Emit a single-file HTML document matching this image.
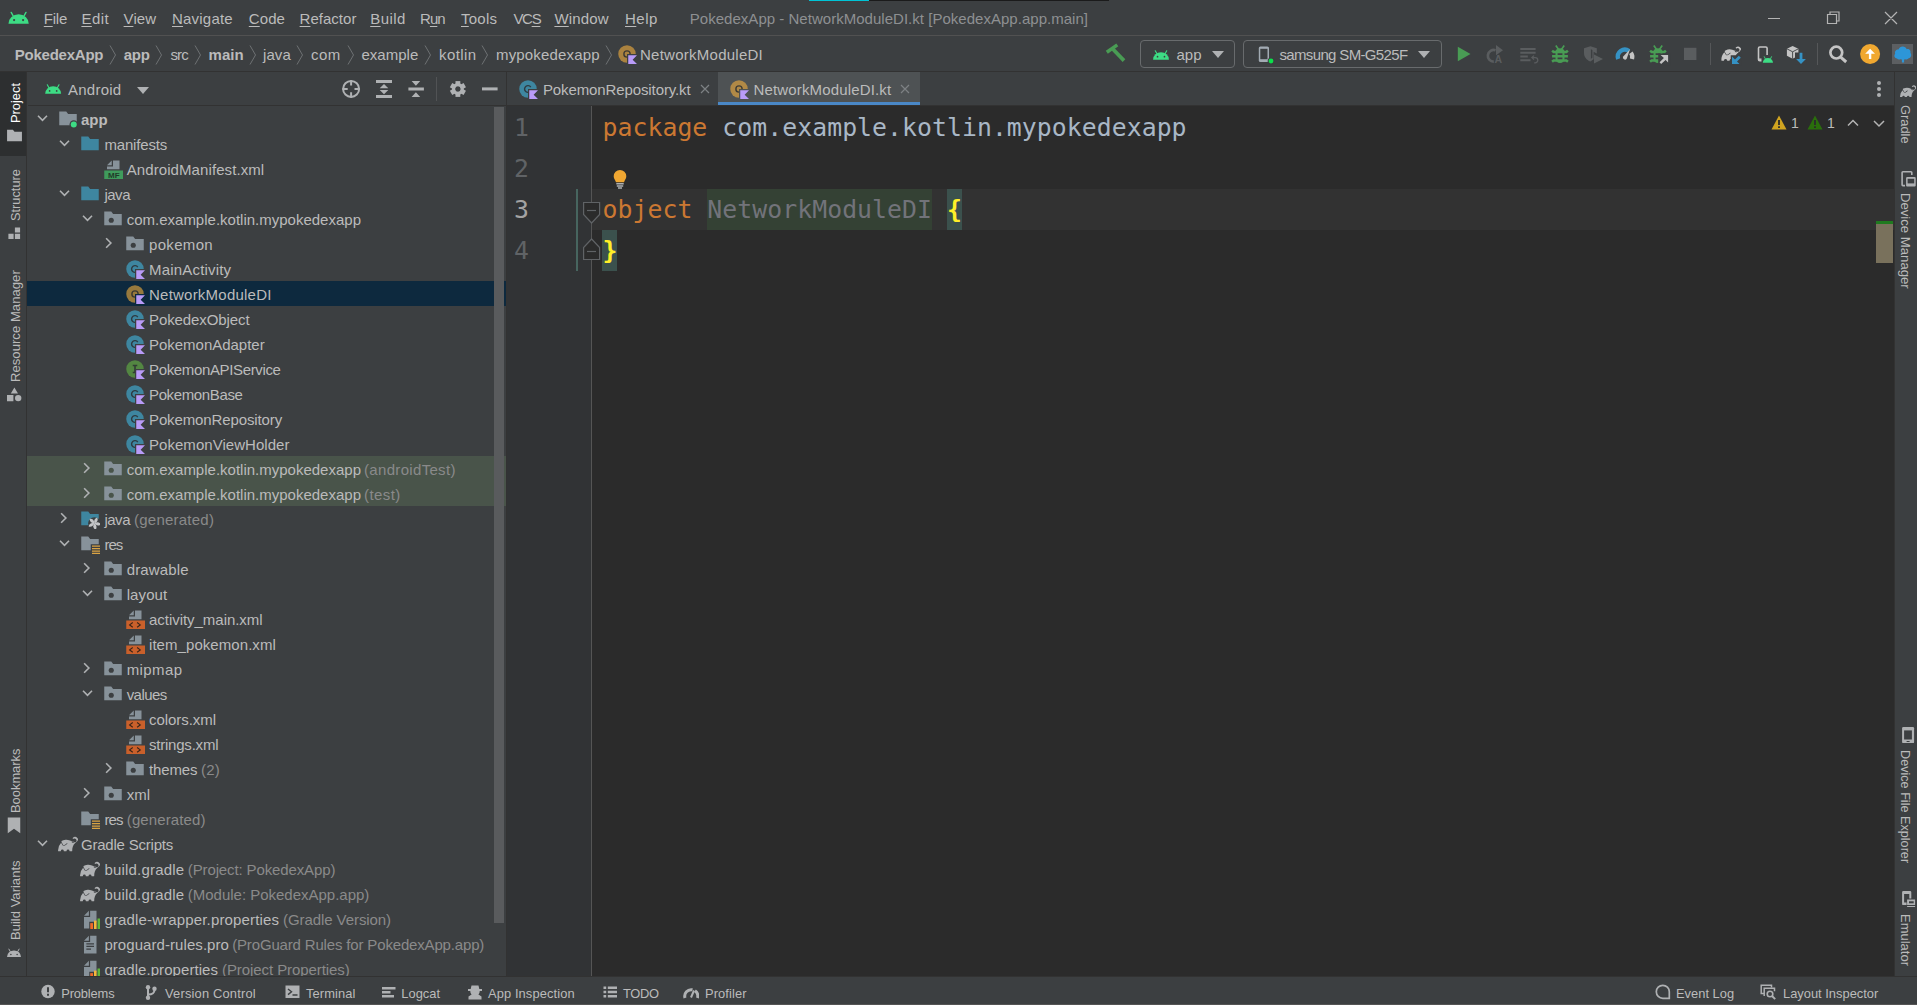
<!DOCTYPE html><html><head><meta charset="utf-8"><title>PokedexApp - NetworkModuleDI.kt</title><style>
*{box-sizing:border-box;margin:0;padding:0}
html,body{width:1917px;height:1005px;overflow:hidden;background:#3c3f41}
body{position:relative;font-family:"Liberation Sans",sans-serif;font-size:15px;color:#bbbbbb;-webkit-font-smoothing:antialiased}
.abs,.ic,.t,.r{position:absolute}
.t{white-space:nowrap;line-height:20px;height:20px}
.b{font-weight:bold}
.h{color:#8a8a8a}
u{text-decoration:underline;text-underline-offset:2px;text-decoration-thickness:1px}
.row{position:absolute;left:28px;width:477px;height:25px}
.code{font-family:"DejaVu Sans Mono","Liberation Mono",monospace;font-size:24.8px;letter-spacing:0.047px;line-height:41px;height:41px;white-space:pre;position:absolute}
.ln{font-family:"DejaVu Sans Mono","Liberation Mono",monospace;font-size:24.8px;line-height:41px;height:41px;position:absolute;left:514px;color:#606366}
.vt{position:absolute;white-space:nowrap;font-size:13.5px;line-height:16px;height:16px;transform-origin:0 0}
.bt{position:absolute;white-space:nowrap;font-size:12.9px;line-height:20px;height:20px;top:983.700px}
</style></head><body>
<div class="abs" style="left:0px;top:35px;width:1917px;height:1px;background:#515151;"></div>
<div class="abs" style="left:809px;top:0px;width:60px;height:1px;background:#00c4d6;"></div>
<div class="abs" style="left:869px;top:0px;width:240px;height:1px;background:#1b1b1b;"></div>
<svg class="ic" style="left:7.3px;top:5.2px" width="23.2" height="23.2" viewBox="0 0 16 16" ><path fill="#3ddc84" d="M1 13a7 6.6 0 0 1 14 0z"/><path stroke="#3ddc84" stroke-width="1" stroke-linecap="round" d="M4.3 7.6 2.9 5.1M11.7 7.6 13.1 5.1"/><circle cx="4.9" cy="10.4" r=".75" fill="#3c3f41"/><circle cx="11.1" cy="10.4" r=".75" fill="#3c3f41"/></svg>
<div class="t " style="left:43.8px;top:9px;letter-spacing:-0.25px;"><u>F</u>ile</div>
<div class="t " style="left:81.4px;top:9px;letter-spacing:0.475px;"><u>E</u>dit</div>
<div class="t " style="left:123.6px;top:9px;letter-spacing:0.05px;"><u>V</u>iew</div>
<div class="t " style="left:172.0px;top:9px;letter-spacing:0.214px;"><u>N</u>avigate</div>
<div class="t " style="left:248.8px;top:9px;letter-spacing:0.075px;"><u>C</u>ode</div>
<div class="t " style="left:299.6px;top:9px;letter-spacing:0.014px;"><u>R</u>efactor</div>
<div class="t " style="left:370.2px;top:9px;letter-spacing:0.44px;"><u>B</u>uild</div>
<div class="t " style="left:420.0px;top:9px;letter-spacing:-0.934px;">R<u>u</u>n</div>
<div class="t " style="left:461.0px;top:9px;letter-spacing:0.26px;"><u>T</u>ools</div>
<div class="t " style="left:513.4px;top:9px;letter-spacing:-1.3px;">VC<u>S</u></div>
<div class="t " style="left:554.4px;top:9px;letter-spacing:0.184px;"><u>W</u>indow</div>
<div class="t " style="left:625.0px;top:9px;letter-spacing:0.475px;"><u>H</u>elp</div>
<div class="t " style="left:689.8px;top:9px;letter-spacing:0.025px;color:#8e9092">PokedexApp - NetworkModuleDI.kt [PokedexApp.app.main]</div>
<svg class="ic" style="left:1760px;top:4px" width="150" height="28" viewBox="0 0 150 28"><path stroke="#b4b4b4" stroke-width="1.200" fill="none" d="M8 14.500h12M67.500 10.500h9v9h-9zM70 10.500V8h9v9h-2.500M125 8l12 12M137 8l-12 12"/></svg>
<div class="abs" style="left:0px;top:71px;width:1917px;height:1px;background:#323232;"></div>
<div class="t b" style="left:14.8px;top:45px;letter-spacing:-0.24px;">PokedexApp</div>
<div class="t b" style="left:123.8px;top:45px;letter-spacing:-0.3px;">app</div>
<div class="t " style="left:170.4px;top:45px;letter-spacing:-0.867px;">src</div>
<div class="t b" style="left:208.6px;top:45px;letter-spacing:0.05px;">main</div>
<div class="t " style="left:263.0px;top:45px;letter-spacing:0.075px;">java</div>
<div class="t " style="left:311.0px;top:45px;letter-spacing:0.4px;">com</div>
<div class="t " style="left:361.4px;top:45px;letter-spacing:0.028px;">example</div>
<div class="t " style="left:439.0px;top:45px;letter-spacing:0.417px;">kotlin</div>
<div class="t " style="left:496.0px;top:45px;letter-spacing:0.158px;">mypokedexapp</div>
<svg class="ic" style="left:108.6px;top:45px" width="8" height="20" viewBox="0 0 8 20"><path d="M1 .5 6.500 10 1 19.500" fill="none" stroke="#6e7173" stroke-width="1"/></svg>
<svg class="ic" style="left:154.8px;top:45px" width="8" height="20" viewBox="0 0 8 20"><path d="M1 .5 6.500 10 1 19.500" fill="none" stroke="#6e7173" stroke-width="1"/></svg>
<svg class="ic" style="left:193.6px;top:45px" width="8" height="20" viewBox="0 0 8 20"><path d="M1 .5 6.500 10 1 19.500" fill="none" stroke="#6e7173" stroke-width="1"/></svg>
<svg class="ic" style="left:248.8px;top:45px" width="8" height="20" viewBox="0 0 8 20"><path d="M1 .5 6.500 10 1 19.500" fill="none" stroke="#6e7173" stroke-width="1"/></svg>
<svg class="ic" style="left:295.9px;top:45px" width="8" height="20" viewBox="0 0 8 20"><path d="M1 .5 6.500 10 1 19.500" fill="none" stroke="#6e7173" stroke-width="1"/></svg>
<svg class="ic" style="left:346.9px;top:45px" width="8" height="20" viewBox="0 0 8 20"><path d="M1 .5 6.500 10 1 19.500" fill="none" stroke="#6e7173" stroke-width="1"/></svg>
<svg class="ic" style="left:423.7px;top:45px" width="8" height="20" viewBox="0 0 8 20"><path d="M1 .5 6.500 10 1 19.500" fill="none" stroke="#6e7173" stroke-width="1"/></svg>
<svg class="ic" style="left:481.2px;top:45px" width="8" height="20" viewBox="0 0 8 20"><path d="M1 .5 6.500 10 1 19.500" fill="none" stroke="#6e7173" stroke-width="1"/></svg>
<svg class="ic" style="left:604.9px;top:45px" width="8" height="20" viewBox="0 0 8 20"><path d="M1 .5 6.500 10 1 19.500" fill="none" stroke="#6e7173" stroke-width="1"/></svg>
<svg class="ic" style="left:617px;top:44px" width="20" height="20" viewBox="0 0 16 16" ><circle cx="8" cy="8" r="7" fill="#F4AF3D" fill-opacity="0.6"/><circle cx="8" cy="8" r="2.500" fill="none" stroke="#2c2f33" stroke-opacity=".85" stroke-width="1.150"/><path fill="#3c3f41" d="M8 8h8v8H8z"/><path fill="#b99bf8" d="M9 9h7l-3.500 3.500L16 16H9z"/></svg>
<div class="t " style="left:640.0px;top:45px;letter-spacing:0.253px;">NetworkModuleDI</div>
<div class="abs" style="left:1140px;top:40px;width:95px;height:27.500px;border:1px solid #686b6d;border-radius:4px"></div>
<svg class="ic" style="left:1152px;top:44.5px" width="18" height="18" viewBox="0 0 16 16" ><path fill="#3ddc84" d="M1 13a7 6.6 0 0 1 14 0z"/><path stroke="#3ddc84" stroke-width="1" stroke-linecap="round" d="M4.3 7.6 2.9 5.1M11.7 7.6 13.1 5.1"/><circle cx="4.9" cy="10.4" r=".75" fill="#3c3f41"/><circle cx="11.1" cy="10.4" r=".75" fill="#3c3f41"/></svg>
<div class="t " style="left:1176.5px;top:45px;">app</div>
<svg class="ic" style="left:1211.5px;top:51px" width="12" height="7" viewBox="0 0 12 7"><path d="M0 0h12L6 7z" fill="#afb1b3"/></svg>
<div class="abs" style="left:1243px;top:40px;width:199px;height:27.500px;border:1px solid #686b6d;border-radius:4px"></div>
<div class="t " style="left:1279.5px;top:45px;letter-spacing:-0.656px;">samsung SM-G525F</div>
<svg class="ic" style="left:1418px;top:51px" width="12" height="7" viewBox="0 0 12 7"><path d="M0 0h12L6 7z" fill="#afb1b3"/></svg>
<svg class="ic" style="left:1100px;top:36px" width="817" height="36" viewBox="1100 36 817 36"><path stroke="#499c54" stroke-width="3.500" fill="none" d="M1106.800 52.300 1117.300 44.900"/><path stroke="#499c54" stroke-width="3.700" fill="none" d="M1112.800 49 1124 60.600"/><rect x="1258.800" y="46.500" width="10.200" height="15.500" rx="1.600" fill="#a2abb3"/><rect x="1260.300" y="48.800" width="7.200" height="10.400" fill="#3c3f41"/><circle cx="1271" cy="61" r="3.300" fill="#3c3f41"/><circle cx="1271" cy="61" r="2.400" fill="#0be04b"/><path fill="#499c54" d="M1457.800 46.800 1470.500 54 1457.800 61.300z"/><path fill="none" stroke="#5a5d5f" stroke-width="2.700" d="M1495.500 50.300A5.800 5.800 0 1 0 1493.800 61.600"/><path fill="#5a5d5f" d="M1496 45 1503 50.250 1496 55.200z"/><text x="1494.600" y="62.800" font-family="Liberation Sans, sans-serif" font-weight="bold" font-size="10.500" fill="#5a5d5f">A</text><path stroke="#5a5d5f" stroke-width="2.100" fill="none" d="M1520.300 49h15.300M1520.300 52.750h15.300M1520.300 56.500h7.500M1520.300 60.300h10.200"/><path stroke="#5a5d5f" stroke-width="1.300" fill="none" d="M1532 57.600h3.200a2.600 2.600 0 0 1 0 5.200h-1M1534 55.600l-2.100 2 2.100 2"/><path fill="#499c54" d="M1560 48.200c2.900 0 4.500 1.600 4.500 3.900v6.400c0 2.700-1.900 4.600-4.500 4.600s-4.500-1.900-4.500-4.600v-6.400c0-2.300 1.600-3.900 4.500-3.900z"/><path stroke="#499c54" stroke-width="1.700" fill="none" d="M1558.4 49.200 1555.8 45.600M1561.6 49.200 1564.2 45.600"/><path stroke="#499c54" stroke-width="2.500" fill="none" d="M1552.1 50.600l1.600 1.400H1566.3l1.600-1.400M1552.1 56.200H1567.9M1552.1 61.800l1.600-1.400H1566.3l1.600 1.400"/><path stroke="#3c3f41" stroke-width="1.800" d="M1557.6 54.100h4.800M1557.6 58.400h4.800"/><path fill="#5a5d5f" d="M1584 48.300l6.400-2 6.400 2v5.200l-3.200-1.800v7.600l-3.200 2.200c-4-1.700-6.400-4.800-6.400-8.600z"/><path fill="#3c3f41" d="M1590.900 49.300v9.500l1.500-1V50z"/><path fill="#5a5d5f" d="M1594 54.500 1603 58.900 1594 63.500z"/><path fill="none" stroke="#3592c4" stroke-width="4.300" d="M1618.200 59A7.100 7.100 0 0 1 1629 50.900"/><path fill="none" stroke="#c4c4c4" stroke-width="4.300" d="M1630.900 52.800A7.100 7.100 0 0 1 1632 59"/><path fill="#c4c4c4" d="M1630 49.300 1626.700 58.700a2.100 2.100 0 0 1-3.700-1.900z"/><g><path fill="#499c54" d="M1658 48.200c2.900 0 4.500 1.600 4.500 3.900v6.400c0 2.700-1.900 4.600-4.500 4.600s-4.500-1.900-4.500-4.600v-6.400c0-2.300 1.600-3.900 4.500-3.900z"/><path stroke="#499c54" stroke-width="1.700" fill="none" d="M1656.4 49.200 1653.8 45.600M1659.6 49.200 1662.2 45.600"/><path stroke="#499c54" stroke-width="2.500" fill="none" d="M1650.1 50.600l1.600 1.400H1664.3l1.600-1.400M1650.1 56.200H1665.9M1650.1 61.800l1.600-1.400H1664.3l1.600 1.400"/><path stroke="#3c3f41" stroke-width="1.800" d="M1655.6 54.100h4.800M1655.6 58.400h4.800"/><path fill="#3c3f41" d="M1658.200 53.500h12v12h-12z"/><path fill="#c4c4c4" d="M1660.600 55h7.500v7.500l-2.500-2.500-4.500 4-1.500-1.700 4.300-4.300z"/></g><rect x="1684" y="47.800" width="12.400" height="12.200" fill="#5a5d5f"/><path stroke="#555759" stroke-width="1" d="M1710.500 43v22M1817.500 43v22"/><g transform="translate(1721.300 43.700) scale(1.230)"><path fill="#c4c4c4" d="M15.5,3.220a2.700,2.700,0,0,0-3.740-.070.260.260,0,0,0,0,.370l.320.330a.250.250,0,0,0,.330,0,1.540,1.540,0,0,1,2,2.310C12.320,8.300,9.560,2.470,3.300,5.450a.860.860,0,0,0-.370,1.200L4,8.510a.850.850,0,0,0,1.150.310l.470-.260a11,11,0,0,0,1.500-1.110.260.260,0,0,1,.340,0h0a.260.260,0,0,1,0,.390,11.180,11.180,0,0,1-1.570,1.180h0l-.470.260a1.360,1.360,0,0,1-.670.180,1.390,1.390,0,0,1-1.210-.7L2.500,7A8.810,8.810,0,0,0,.060,13.520a.260.260,0,0,0,.260.250H2a.250.250,0,0,0,.250-.220,1.220,1.220,0,0,1,2.420,0,.250.250,0,0,0,.250.220H6.560a.250.250,0,0,0,.250-.220,1.220,1.220,0,0,1,2.420,0,.250.250,0,0,0,.250.220h1.620a.260.260,0,0,0,.260-.250c0-2.290.650-4.920,2.410-6.230C16.740,4.890,16.190,3.910,15.500,3.220Zm-3.340,4L11,6.640H11a.730.730,0,1,1,1.160.590Z"/></g><path fill="#3c3f41" d="M1730.700 55.200l5 0 3-3 3.600 3.600-3 3 2 2v4.500h-10.600z"/><path fill="#3592c4" d="M1732 56.500v7.500h7.500l-2.500-2.500 3.800-3.700-2-2-3.800 3.700z"/><rect x="1758.500" y="47" width="8.600" height="13.800" rx="1.300" fill="none" stroke="#c4c4c4" stroke-width="1.600"/><path stroke="#c4c4c4" stroke-width="1.400" d="M1758.500 59.200h5"/><path fill="#3c3f41" d="M1761.500 55h12.500v9h-12.500z"/><path fill="#3ddc84" d="M1762.800 62.800a5.100 4.800 0 0 1 10.200 0z"/><path stroke="#3ddc84" stroke-width=".9" stroke-linecap="round" d="M1765.200 58.600 1764.300 56.700M1770.600 58.600 1771.500 56.700"/><path fill="#c4c4c4" d="M1792.600 46 1798.400 48.800v6.900l-5.800 3.100-5.700-3.100v-6.900z"/><path stroke="#3c3f41" stroke-width=".9" fill="none" d="M1786.900 48.800 1792.600 51.800 1798.400 48.800M1792.600 51.800v7"/><path fill="#3c3f41" d="M1795 52.500h11.500v12H1795z"/><path fill="#3592c4" d="M1799.600 52.800h2.800v6.200h3.500l-4.900 5-4.900-5h3.500z"/><circle cx="1836.300" cy="52.600" r="5.900" fill="none" stroke="#c4c4c4" stroke-width="2.700"/><path stroke="#c4c4c4" stroke-width="3" d="M1840.700 57.200 1846.200 62"/><circle cx="1870.100" cy="54" r="10" fill="#f0a830"/><path fill="#fff" d="M1870.100 48.700 1875 53.700h-3.700v5.400h-2.400v-5.400H1865.200z"/><rect x="1892" y="44" width="21" height="20" fill="#5c5f62"/><path fill="#2d96d8" d="M1897 58.500c-2.600 0-3.300-3.200-1.800-4.700-.8-2.600 1.300-4.600 3.300-4.200 1.200-3.900 6.800-4.300 8.200-.4 2.400-.7 4.500 1.500 3.700 3.900 1.500 1.400.9 4.800-1.700 5.200-.8 1.200-2.500 1.500-3.900.6l-.7 1.300v2.300h-2.200v-2.400l-.8-1.200c-1.500.9-3.300.7-4.100-.4z"/></svg>
<div class="abs" style="left:26px;top:72px;width:1px;height:904px;background:#323232;"></div>
<div class="abs" style="left:0px;top:72px;width:26px;height:84px;background:#2d2f30;"></div>
<div class="vt" style="left:8px;top:122.8px;transform:rotate(-90deg);color:#ffffff;font-size:12.85px">Project</div>
<svg class="ic" style="left:6px;top:127px" width="17" height="17" viewBox="0 0 16 16" ><path fill="#afb1b3" d="M1 2.500h5.500l1.500 2H15v9H1z"/></svg>
<div class="vt" style="left:8px;top:220.5px;transform:rotate(-90deg);color:#bbbbbb;font-size:12.8px">Structure</div>
<svg class="ic" style="left:0;top:220px" width="26" height="24" viewBox="0 220 26 24"><path fill="#afb1b3" d="M14.900 227.400h5.200v5.200h-5.200zM8.400 233.700h5.200v5.200H8.400zM14.900 233.700h5.200v5.200h-5.200z"/></svg>
<div class="vt" style="left:8px;top:382px;transform:rotate(-90deg);color:#bbbbbb;font-size:13.15px">Resource Manager</div>
<svg class="ic" style="left:0;top:384px" width="26" height="20" viewBox="0 384 26 20"><path fill="#afb1b3" d="M14.400 387.500 18 393.400h-7.200zM7 395.100h6.400v6.100H7z"/><circle cx="18.200" cy="398.100" r="3.200" fill="#afb1b3"/></svg>
<div class="vt" style="left:8px;top:812.5px;transform:rotate(-90deg);color:#bbbbbb;font-size:12.9px">Bookmarks</div>
<svg class="ic" style="left:4px;top:815px" width="20" height="20" viewBox="0 0 16 16" ><path fill="#afb1b3" d="M3 2h10v12.500L8 11l-5 3.500z"/></svg>
<div class="vt" style="left:8px;top:940px;transform:rotate(-90deg);color:#bbbbbb;font-size:13.05px">Build Variants</div>
<svg class="ic" style="left:6px;top:944px" width="16" height="16" viewBox="0 0 16 16" ><path fill="#afb1b3" d="M1 13a7 6.6 0 0 1 14 0z"/><path stroke="#afb1b3" stroke-width="1" stroke-linecap="round" d="M4.3 7.6 2.9 5.1M11.7 7.6 13.1 5.1"/><circle cx="4.9" cy="10.4" r=".75" fill="#3c3f41"/><circle cx="11.1" cy="10.4" r=".75" fill="#3c3f41"/></svg>
<div class="abs" style="left:28px;top:105px;width:478px;height:1px;background:#323232;"></div>
<svg class="ic" style="left:43.9px;top:78.5px" width="18.3" height="18.3" viewBox="0 0 16 16" ><path fill="#3ddc84" d="M1 13a7 6.6 0 0 1 14 0z"/><path stroke="#3ddc84" stroke-width="1" stroke-linecap="round" d="M4.3 7.6 2.9 5.1M11.7 7.6 13.1 5.1"/><circle cx="4.9" cy="10.4" r=".75" fill="#3c3f41"/><circle cx="11.1" cy="10.4" r=".75" fill="#3c3f41"/></svg>
<div class="t " style="left:68px;top:80px;letter-spacing:0.25px">Android</div>
<svg class="ic" style="left:137px;top:87px" width="12" height="7" viewBox="0 0 12 7"><path d="M0 0h12L6 7z" fill="#afb1b3"/></svg>
<svg class="ic" style="left:330px;top:74px" width="180" height="30" viewBox="330 74 180 30"><circle cx="351.100" cy="88.900" r="8" fill="none" stroke="#afb1b3" stroke-width="2"/><path stroke="#afb1b3" stroke-width="2" d="M342.500 88.900h5.200M354.500 88.900h5.200M351.100 80.300v5.200M351.100 92.300v5.200"/><path fill="#afb1b3" d="M376 80h16v2.900h-16zM376 95.100h16v2.900h-16zM384 83.900 388.300 88.200h-8.600zM384 94.200 388.300 89.900h-8.600z"/><path fill="#afb1b3" d="M408.400 87.600h15.500v2.800h-15.500zM411.600 81h8.600l-4.300 4.700zM411.600 97h8.600l-4.300-4.700z"/><path stroke="#515355" stroke-width="1" d="M436.500 77v24"/><g fill="#afb1b3"><rect x="455.500" y="81.100" width="4.800" height="5" transform="rotate(0 457.900 89)"/><rect x="455.500" y="81.100" width="4.800" height="5" transform="rotate(60 457.900 89)"/><rect x="455.500" y="81.100" width="4.800" height="5" transform="rotate(120 457.900 89)"/><rect x="455.500" y="81.100" width="4.800" height="5" transform="rotate(180 457.900 89)"/><rect x="455.500" y="81.100" width="4.800" height="5" transform="rotate(240 457.900 89)"/><rect x="455.500" y="81.100" width="4.800" height="5" transform="rotate(300 457.900 89)"/></g><circle cx="457.900" cy="89" r="4.300" fill="none" stroke="#afb1b3" stroke-width="3.200"/><rect x="482" y="87.400" width="15.600" height="3" fill="#afb1b3"/></svg>
<div class="abs" style="left:27px;top:106px;width:479px;height:870px;overflow:hidden">
<svg class="ic" style="left:4.75px;top:2px" width="20" height="20" viewBox="0 0 16 16" ><path fill="none" stroke="#afb1b3" stroke-width="1.300" d="M4.800 6.200l3.600 3.600 3.600-3.600"/></svg>
<svg class="ic" style="left:30.75px;top:2.5px" width="20" height="20" viewBox="0 0 16 16" ><path fill="#87929a" d="M1 2h5.6l1.5 2H15v9H1z"/><circle cx="12.6" cy="12.4" r="3.4" fill="#3c3f41"/><circle cx="12.6" cy="12.4" r="2.4" fill="#3ddc84"/></svg>
<div class="t" id="r0m" style="left:54px;top:4px;letter-spacing:0px;font-weight:bold">app</div>
<svg class="ic" style="left:26.75px;top:27px" width="20" height="20" viewBox="0 0 16 16" ><path fill="none" stroke="#afb1b3" stroke-width="1.300" d="M4.800 6.200l3.600 3.600 3.600-3.600"/></svg>
<svg class="ic" style="left:52.75px;top:27.5px" width="20" height="20" viewBox="0 0 16 16" ><path fill="#3e86a0" d="M1 2h5.6l1.5 2H15v9H1z"/></svg>
<div class="t" id="r1m" style="left:77.4px;top:29px;letter-spacing:-0.156px">manifests</div>
<svg class="ic" style="left:75.75px;top:52.5px" width="20" height="20" viewBox="0 0 16 16" ><path fill="#87929a" d="M7 1.200 3.200 5H7z"/><path fill="#87929a" d="M8 1.200V6H3.200v2.200h10V1.200z"/><rect x="1" y="9.200" width="15.200" height="7" fill="#3f9b5c"/><text x="8.600" y="15.300" font-family="Liberation Sans, sans-serif" font-size="6.400" font-weight="bold" text-anchor="middle" fill="#1f3b29">MF</text></svg>
<div class="t" id="r2m" style="left:99.7px;top:54px;letter-spacing:0.09px">AndroidManifest.xml</div>
<svg class="ic" style="left:26.75px;top:77px" width="20" height="20" viewBox="0 0 16 16" ><path fill="none" stroke="#afb1b3" stroke-width="1.300" d="M4.800 6.200l3.600 3.600 3.600-3.600"/></svg>
<svg class="ic" style="left:52.75px;top:77.5px" width="20" height="20" viewBox="0 0 16 16" ><path fill="#3e86a0" d="M1 2h5.6l1.5 2H15v9H1z"/></svg>
<div class="t" id="r3m" style="left:77.4px;top:79px;letter-spacing:-0.475px">java</div>
<svg class="ic" style="left:49.75px;top:102px" width="20" height="20" viewBox="0 0 16 16" ><path fill="none" stroke="#afb1b3" stroke-width="1.300" d="M4.800 6.200l3.600 3.600 3.600-3.600"/></svg>
<svg class="ic" style="left:75.75px;top:102.5px" width="20" height="20" viewBox="0 0 16 16" ><path fill="#87929a" d="M1 2h5.6l1.5 2H15v9H1z"/><circle cx="6.600" cy="9" r="2.050" fill="#3c3f41"/></svg>
<div class="t" id="r4m" style="left:99.7px;top:104px;letter-spacing:0.0px">com.example.kotlin.mypokedexapp</div>
<svg class="ic" style="left:71.75px;top:127px" width="20" height="20" viewBox="0 0 16 16" ><path fill="none" stroke="#afb1b3" stroke-width="1.300" d="M5.700 4.200l3.800 3.800-3.800 3.800"/></svg>
<svg class="ic" style="left:97.75px;top:127.5px" width="20" height="20" viewBox="0 0 16 16" ><path fill="#87929a" d="M1 2h5.6l1.5 2H15v9H1z"/><circle cx="6.600" cy="9" r="2.050" fill="#3c3f41"/></svg>
<div class="t" id="r5m" style="left:122px;top:129px;letter-spacing:0.328px">pokemon</div>
<svg class="ic" style="left:97.75px;top:152.5px" width="20" height="20" viewBox="0 0 16 16" ><circle cx="8" cy="8" r="7" fill="#40B6E0" fill-opacity="0.6"/><path fill="none" stroke="#2c2f33" stroke-opacity=".85" stroke-width="1.150" d="M10.200 6.500A2.700 2.700 0 1 0 10.200 9.500"/><path fill="#3c3f41" d="M8 8h8v8H8z"/><path fill="#b99bf8" d="M9 9h7l-3.500 3.500L16 16H9z"/></svg>
<div class="t" id="r6m" style="left:122px;top:154px;letter-spacing:0.191px">MainActivity</div>
<div class="abs" style="left:0;top:175px;width:479px;height:25px;background:#0d293e"></div>
<svg class="ic" style="left:97.75px;top:177.5px" width="20" height="20" viewBox="0 0 16 16" ><circle cx="8" cy="8" r="7" fill="#F4AF3D" fill-opacity="0.6"/><circle cx="8" cy="8" r="2.500" fill="none" stroke="#2c2f33" stroke-opacity=".85" stroke-width="1.150"/><path fill="#0d293e" d="M8 8h8v8H8z"/><path fill="#b99bf8" d="M9 9h7l-3.500 3.500L16 16H9z"/></svg>
<div class="t" id="r7m" style="left:122px;top:179px;letter-spacing:0.227px">NetworkModuleDI</div>
<svg class="ic" style="left:97.75px;top:202.5px" width="20" height="20" viewBox="0 0 16 16" ><circle cx="8" cy="8" r="7" fill="#40B6E0" fill-opacity="0.6"/><path fill="none" stroke="#2c2f33" stroke-opacity=".85" stroke-width="1.150" d="M10.200 6.500A2.700 2.700 0 1 0 10.200 9.500"/><path fill="#3c3f41" d="M8 8h8v8H8z"/><path fill="#b99bf8" d="M9 9h7l-3.500 3.500L16 16H9z"/></svg>
<div class="t" id="r8m" style="left:122px;top:204px;letter-spacing:-0.085px">PokedexObject</div>
<svg class="ic" style="left:97.75px;top:227.5px" width="20" height="20" viewBox="0 0 16 16" ><circle cx="8" cy="8" r="7" fill="#40B6E0" fill-opacity="0.6"/><path fill="none" stroke="#2c2f33" stroke-opacity=".85" stroke-width="1.150" d="M10.200 6.500A2.700 2.700 0 1 0 10.200 9.500"/><path fill="#3c3f41" d="M8 8h8v8H8z"/><path fill="#b99bf8" d="M9 9h7l-3.500 3.500L16 16H9z"/></svg>
<div class="t" id="r9m" style="left:122px;top:229px;letter-spacing:-0.021px">PokemonAdapter</div>
<svg class="ic" style="left:97.75px;top:252.5px" width="20" height="20" viewBox="0 0 16 16" ><circle cx="8" cy="8" r="7" fill="#62B543" fill-opacity="0.6"/><path fill="none" stroke="#2c2f33" stroke-opacity=".85" stroke-width="1.3" d="M6.2 5.200h3.600M6.200 10.800h3.600M8 5.200v5.600"/><path fill="#3c3f41" d="M8 8h8v8H8z"/><path fill="#b99bf8" d="M9 9h7l-3.500 3.500L16 16H9z"/></svg>
<div class="t" id="r10m" style="left:122px;top:254px;letter-spacing:-0.353px">PokemonAPIService</div>
<svg class="ic" style="left:97.75px;top:277.5px" width="20" height="20" viewBox="0 0 16 16" ><circle cx="8" cy="8" r="7" fill="#40B6E0" fill-opacity="0.6"/><path fill="none" stroke="#2c2f33" stroke-opacity=".85" stroke-width="1.150" d="M10.200 6.500A2.700 2.700 0 1 0 10.200 9.500"/><path fill="#3c3f41" d="M8 8h8v8H8z"/><path fill="#b99bf8" d="M9 9h7l-3.500 3.500L16 16H9z"/></svg>
<div class="t" id="r11m" style="left:122px;top:279px;letter-spacing:-0.364px">PokemonBase</div>
<svg class="ic" style="left:97.75px;top:302.5px" width="20" height="20" viewBox="0 0 16 16" ><circle cx="8" cy="8" r="7" fill="#40B6E0" fill-opacity="0.6"/><path fill="none" stroke="#2c2f33" stroke-opacity=".85" stroke-width="1.150" d="M10.200 6.500A2.700 2.700 0 1 0 10.200 9.500"/><path fill="#3c3f41" d="M8 8h8v8H8z"/><path fill="#b99bf8" d="M9 9h7l-3.500 3.500L16 16H9z"/></svg>
<div class="t" id="r12m" style="left:122px;top:304px;letter-spacing:-0.118px">PokemonRepository</div>
<svg class="ic" style="left:97.75px;top:327.5px" width="20" height="20" viewBox="0 0 16 16" ><circle cx="8" cy="8" r="7" fill="#40B6E0" fill-opacity="0.6"/><path fill="none" stroke="#2c2f33" stroke-opacity=".85" stroke-width="1.150" d="M10.200 6.500A2.700 2.700 0 1 0 10.200 9.500"/><path fill="#3c3f41" d="M8 8h8v8H8z"/><path fill="#b99bf8" d="M9 9h7l-3.500 3.500L16 16H9z"/></svg>
<div class="t" id="r13m" style="left:122px;top:329px;letter-spacing:0.041px">PokemonViewHolder</div>
<div class="abs" style="left:0;top:350px;width:479px;height:25px;background:#49544a"></div>
<svg class="ic" style="left:49.75px;top:352px" width="20" height="20" viewBox="0 0 16 16" ><path fill="none" stroke="#afb1b3" stroke-width="1.300" d="M5.700 4.200l3.800 3.800-3.800 3.800"/></svg>
<svg class="ic" style="left:75.75px;top:352.5px" width="20" height="20" viewBox="0 0 16 16" ><path fill="#87929a" d="M1 2h5.6l1.5 2H15v9H1z"/><circle cx="6.600" cy="9" r="2.050" fill="#49544a"/></svg>
<div class="t" id="r14m" style="left:99.7px;top:354px;letter-spacing:0.0px">com.example.kotlin.mypokedexapp</div>
<div class="t h" id="r14h" style="left:337.0px;top:354px;letter-spacing:0.324px">(androidTest)</div>
<div class="abs" style="left:0;top:375px;width:479px;height:25px;background:#49544a"></div>
<svg class="ic" style="left:49.75px;top:377px" width="20" height="20" viewBox="0 0 16 16" ><path fill="none" stroke="#afb1b3" stroke-width="1.300" d="M5.700 4.200l3.800 3.800-3.800 3.800"/></svg>
<svg class="ic" style="left:75.75px;top:377.5px" width="20" height="20" viewBox="0 0 16 16" ><path fill="#87929a" d="M1 2h5.6l1.5 2H15v9H1z"/><circle cx="6.600" cy="9" r="2.050" fill="#49544a"/></svg>
<div class="t" id="r15m" style="left:99.7px;top:379px;letter-spacing:0.0px">com.example.kotlin.mypokedexapp</div>
<div class="t h" id="r15h" style="left:337.0px;top:379px;letter-spacing:0.417px">(test)</div>
<svg class="ic" style="left:26.75px;top:402px" width="20" height="20" viewBox="0 0 16 16" ><path fill="none" stroke="#afb1b3" stroke-width="1.300" d="M5.700 4.200l3.800 3.800-3.800 3.800"/></svg>
<svg class="ic" style="left:52.75px;top:402.5px" width="20" height="20" viewBox="0 0 16 16" ><path fill="#3e86a0" d="M1 2h5.6l1.5 2H15v9H1z"/><circle cx="11.500" cy="11.500" r="5" fill="#3c3f41"/><g fill="#c4c6c8" transform="translate(11.500 11.500) scale(1.220) translate(-11.500 -11.500)"><path transform="rotate(0 11.500 11.500)" d="M11.500 11.500C11 9.800 11.600 8.200 13.300 7.600 14.200 9.300 13.400 10.900 11.500 11.500z"/><path transform="rotate(72 11.500 11.500)" d="M11.500 11.500C11 9.800 11.600 8.200 13.300 7.600 14.200 9.300 13.400 10.900 11.500 11.500z"/><path transform="rotate(144 11.500 11.500)" d="M11.500 11.500C11 9.800 11.600 8.200 13.300 7.600 14.200 9.300 13.400 10.900 11.500 11.500z"/><path transform="rotate(216 11.500 11.500)" d="M11.500 11.500C11 9.800 11.600 8.200 13.300 7.600 14.200 9.300 13.400 10.900 11.500 11.500z"/><path transform="rotate(288 11.500 11.500)" d="M11.500 11.500C11 9.800 11.600 8.200 13.300 7.600 14.200 9.300 13.400 10.900 11.500 11.500z"/></g></svg>
<div class="t" id="r16m" style="left:77.4px;top:404px;letter-spacing:-0.475px">java</div>
<div class="t h" id="r16h" style="left:107.0px;top:404px;letter-spacing:0.236px">(generated)</div>
<svg class="ic" style="left:26.75px;top:427px" width="20" height="20" viewBox="0 0 16 16" ><path fill="none" stroke="#afb1b3" stroke-width="1.300" d="M4.800 6.200l3.600 3.600 3.600-3.600"/></svg>
<svg class="ic" style="left:52.75px;top:427.5px" width="20" height="20" viewBox="0 0 16 16" ><path fill="#87929a" d="M1 2h5.6l1.5 2H15v9H1z"/><rect x="8.6" y="8.2" width="7.4" height="7.8" fill="#3c3f41"/><path stroke="#d9a343" stroke-width="1" d="M9.6 9.7H16M9.6 11.7H16M9.6 13.7H16M9.6 15.5H16"/></svg>
<div class="t" id="r17m" style="left:77.4px;top:429px;letter-spacing:-1.0px">res</div>
<svg class="ic" style="left:49.75px;top:452px" width="20" height="20" viewBox="0 0 16 16" ><path fill="none" stroke="#afb1b3" stroke-width="1.300" d="M5.700 4.200l3.800 3.800-3.800 3.800"/></svg>
<svg class="ic" style="left:75.75px;top:452.5px" width="20" height="20" viewBox="0 0 16 16" ><path fill="#87929a" d="M1 2h5.6l1.5 2H15v9H1z"/><circle cx="6.600" cy="9" r="2.050" fill="#3c3f41"/></svg>
<div class="t" id="r18m" style="left:99.7px;top:454px;letter-spacing:0.136px">drawable</div>
<svg class="ic" style="left:49.75px;top:477px" width="20" height="20" viewBox="0 0 16 16" ><path fill="none" stroke="#afb1b3" stroke-width="1.300" d="M4.800 6.200l3.600 3.600 3.600-3.600"/></svg>
<svg class="ic" style="left:75.75px;top:477.5px" width="20" height="20" viewBox="0 0 16 16" ><path fill="#87929a" d="M1 2h5.6l1.5 2H15v9H1z"/><circle cx="6.600" cy="9" r="2.050" fill="#3c3f41"/></svg>
<div class="t" id="r19m" style="left:99.7px;top:479px;letter-spacing:0.099px">layout</div>
<svg class="ic" style="left:97.75px;top:502.5px" width="20" height="20" viewBox="0 0 16 16" ><path fill="#87929a" d="M7 1.200 3.200 5H7z"/><path fill="#87929a" d="M8 1.200V6H3.200v2.200h10V1.200z"/><rect x="1" y="9.200" width="15.200" height="7" fill="#c9602b"/><path fill="none" stroke="#3a2418" stroke-width=".9" d="M6.200 10.800 3.700 12.700l2.500 1.900M9.700 10.800 12.200 12.700l-2.500 1.900"/></svg>
<div class="t" id="r20m" style="left:122px;top:504px;letter-spacing:-0.036px">activity_main.xml</div>
<svg class="ic" style="left:97.75px;top:527.5px" width="20" height="20" viewBox="0 0 16 16" ><path fill="#87929a" d="M7 1.200 3.200 5H7z"/><path fill="#87929a" d="M8 1.200V6H3.200v2.200h10V1.200z"/><rect x="1" y="9.200" width="15.200" height="7" fill="#c9602b"/><path fill="none" stroke="#3a2418" stroke-width=".9" d="M6.200 10.800 3.700 12.700l2.500 1.900M9.700 10.800 12.200 12.700l-2.500 1.900"/></svg>
<div class="t" id="r21m" style="left:122px;top:529px;letter-spacing:0.062px">item_pokemon.xml</div>
<svg class="ic" style="left:49.75px;top:552px" width="20" height="20" viewBox="0 0 16 16" ><path fill="none" stroke="#afb1b3" stroke-width="1.300" d="M5.700 4.200l3.800 3.800-3.800 3.800"/></svg>
<svg class="ic" style="left:75.75px;top:552.5px" width="20" height="20" viewBox="0 0 16 16" ><path fill="#87929a" d="M1 2h5.6l1.5 2H15v9H1z"/><circle cx="6.600" cy="9" r="2.050" fill="#3c3f41"/></svg>
<div class="t" id="r22m" style="left:99.7px;top:554px;letter-spacing:0.4px">mipmap</div>
<svg class="ic" style="left:49.75px;top:577px" width="20" height="20" viewBox="0 0 16 16" ><path fill="none" stroke="#afb1b3" stroke-width="1.300" d="M4.800 6.200l3.600 3.600 3.600-3.600"/></svg>
<svg class="ic" style="left:75.75px;top:577.5px" width="20" height="20" viewBox="0 0 16 16" ><path fill="#87929a" d="M1 2h5.6l1.5 2H15v9H1z"/><circle cx="6.600" cy="9" r="2.050" fill="#3c3f41"/></svg>
<div class="t" id="r23m" style="left:99.7px;top:579px;letter-spacing:-0.567px">values</div>
<svg class="ic" style="left:97.75px;top:602.5px" width="20" height="20" viewBox="0 0 16 16" ><path fill="#87929a" d="M7 1.200 3.200 5H7z"/><path fill="#87929a" d="M8 1.200V6H3.200v2.200h10V1.200z"/><rect x="1" y="9.200" width="15.200" height="7" fill="#c9602b"/><path fill="none" stroke="#3a2418" stroke-width=".9" d="M6.200 10.800 3.700 12.700l2.500 1.900M9.700 10.800 12.200 12.700l-2.500 1.900"/></svg>
<div class="t" id="r24m" style="left:122px;top:604px;letter-spacing:-0.05px">colors.xml</div>
<svg class="ic" style="left:97.75px;top:627.5px" width="20" height="20" viewBox="0 0 16 16" ><path fill="#87929a" d="M7 1.200 3.200 5H7z"/><path fill="#87929a" d="M8 1.200V6H3.200v2.200h10V1.200z"/><rect x="1" y="9.200" width="15.200" height="7" fill="#c9602b"/><path fill="none" stroke="#3a2418" stroke-width=".9" d="M6.200 10.800 3.700 12.700l2.500 1.900M9.700 10.800 12.200 12.700l-2.500 1.900"/></svg>
<div class="t" id="r25m" style="left:122px;top:629px;letter-spacing:-0.219px">strings.xml</div>
<svg class="ic" style="left:71.75px;top:652px" width="20" height="20" viewBox="0 0 16 16" ><path fill="none" stroke="#afb1b3" stroke-width="1.300" d="M5.700 4.200l3.800 3.800-3.800 3.800"/></svg>
<svg class="ic" style="left:97.75px;top:652.5px" width="20" height="20" viewBox="0 0 16 16" ><path fill="#87929a" d="M1 2h5.6l1.5 2H15v9H1z"/><circle cx="6.600" cy="9" r="2.050" fill="#3c3f41"/></svg>
<div class="t" id="r26m" style="left:122px;top:654px;letter-spacing:-0.15px">themes</div>
<div class="t h" id="r26h" style="left:174.0px;top:654px;letter-spacing:0.201px">(2)</div>
<svg class="ic" style="left:49.75px;top:677px" width="20" height="20" viewBox="0 0 16 16" ><path fill="none" stroke="#afb1b3" stroke-width="1.300" d="M5.700 4.200l3.800 3.800-3.800 3.800"/></svg>
<svg class="ic" style="left:75.75px;top:677.5px" width="20" height="20" viewBox="0 0 16 16" ><path fill="#87929a" d="M1 2h5.6l1.5 2H15v9H1z"/><circle cx="6.600" cy="9" r="2.050" fill="#3c3f41"/></svg>
<div class="t" id="r27m" style="left:99.7px;top:679px;letter-spacing:0.033px">xml</div>
<svg class="ic" style="left:52.75px;top:702.5px" width="20" height="20" viewBox="0 0 16 16" ><path fill="#87929a" d="M1 2h5.6l1.5 2H15v9H1z"/><rect x="8.6" y="8.2" width="7.4" height="7.8" fill="#3c3f41"/><path stroke="#d9a343" stroke-width="1" d="M9.6 9.7H16M9.6 11.7H16M9.6 13.7H16M9.6 15.5H16"/></svg>
<div class="t" id="r28m" style="left:77.4px;top:704px;letter-spacing:-0.867px">res</div>
<div class="t h" id="r28h" style="left:99.8px;top:704px;letter-spacing:0.118px">(generated)</div>
<svg class="ic" style="left:4.75px;top:727px" width="20" height="20" viewBox="0 0 16 16" ><path fill="none" stroke="#afb1b3" stroke-width="1.300" d="M4.800 6.200l3.600 3.600 3.600-3.600"/></svg>
<svg class="ic" style="left:30.75px;top:727.5px" width="20" height="20" viewBox="0 0 16 16" ><path fill="#afb1b3" d="M15.5,3.220a2.700,2.700,0,0,0-3.740-.070.260.260,0,0,0,0,.370l.320.330a.250.250,0,0,0,.330,0,1.540,1.540,0,0,1,2,2.310C12.320,8.300,9.560,2.470,3.300,5.450a.860.860,0,0,0-.370,1.200L4,8.510a.850.850,0,0,0,1.150.310l.470-.260a11,11,0,0,0,1.500-1.110.260.260,0,0,1,.340,0h0a.260.260,0,0,1,0,.390,11.180,11.180,0,0,1-1.570,1.180h0l-.470.260a1.360,1.360,0,0,1-.670.180,1.390,1.390,0,0,1-1.210-.7L2.500,7A8.810,8.810,0,0,0,.060,13.520a.260.260,0,0,0,.260.250H2a.250.250,0,0,0,.250-.220,1.220,1.220,0,0,1,2.420,0,.250.250,0,0,0,.250.220H6.560a.250.250,0,0,0,.250-.220,1.220,1.220,0,0,1,2.420,0,.250.250,0,0,0,.250.220h1.620a.260.260,0,0,0,.260-.250c0-2.290.650-4.920,2.410-6.230C16.740,4.890,16.190,3.910,15.500,3.220Zm-3.340,4L11,6.640H11a.730.730,0,1,1,1.160.590Z"/></svg>
<div class="t" id="r29m" style="left:54px;top:729px;letter-spacing:-0.214px">Gradle Scripts</div>
<svg class="ic" style="left:52.75px;top:752.5px" width="20" height="20" viewBox="0 0 16 16" ><path fill="#afb1b3" d="M15.5,3.220a2.700,2.700,0,0,0-3.740-.070.260.260,0,0,0,0,.370l.320.330a.250.250,0,0,0,.330,0,1.540,1.540,0,0,1,2,2.310C12.320,8.300,9.560,2.470,3.300,5.450a.860.860,0,0,0-.370,1.200L4,8.510a.850.850,0,0,0,1.150.310l.470-.260a11,11,0,0,0,1.500-1.110.260.260,0,0,1,.340,0h0a.260.260,0,0,1,0,.390,11.180,11.180,0,0,1-1.570,1.180h0l-.470.260a1.360,1.360,0,0,1-.670.180,1.390,1.390,0,0,1-1.210-.7L2.500,7A8.810,8.810,0,0,0,.060,13.520a.260.260,0,0,0,.260.250H2a.250.250,0,0,0,.250-.220,1.220,1.220,0,0,1,2.420,0,.250.250,0,0,0,.250.220H6.560a.250.250,0,0,0,.250-.220,1.220,1.220,0,0,1,2.420,0,.250.250,0,0,0,.250.220h1.620a.260.260,0,0,0,.260-.250c0-2.290.650-4.920,2.410-6.230C16.740,4.890,16.190,3.910,15.500,3.220Zm-3.340,4L11,6.640H11a.730.730,0,1,1,1.160.590Z"/></svg>
<div class="t" id="r30m" style="left:77.4px;top:754px;letter-spacing:0.199px">build.gradle</div>
<div class="t h" id="r30h" style="left:160.8px;top:754px;letter-spacing:-0.124px">(Project: PokedexApp)</div>
<svg class="ic" style="left:52.75px;top:777.5px" width="20" height="20" viewBox="0 0 16 16" ><path fill="#afb1b3" d="M15.5,3.220a2.700,2.700,0,0,0-3.740-.070.260.260,0,0,0,0,.370l.320.330a.250.250,0,0,0,.330,0,1.540,1.540,0,0,1,2,2.310C12.320,8.300,9.560,2.470,3.300,5.450a.860.860,0,0,0-.370,1.200L4,8.510a.850.850,0,0,0,1.150.310l.470-.260a11,11,0,0,0,1.500-1.110.260.260,0,0,1,.340,0h0a.260.260,0,0,1,0,.390,11.180,11.180,0,0,1-1.570,1.180h0l-.470.260a1.360,1.360,0,0,1-.670.180,1.390,1.390,0,0,1-1.210-.7L2.500,7A8.810,8.810,0,0,0,.060,13.520a.260.260,0,0,0,.260.250H2a.250.250,0,0,0,.250-.220,1.220,1.220,0,0,1,2.420,0,.250.250,0,0,0,.250.220H6.560a.250.250,0,0,0,.250-.220,1.220,1.220,0,0,1,2.420,0,.250.250,0,0,0,.250.220h1.620a.260.260,0,0,0,.260-.250c0-2.290.650-4.920,2.410-6.230C16.740,4.890,16.190,3.910,15.500,3.220Zm-3.340,4L11,6.640H11a.730.730,0,1,1,1.160.590Z"/></svg>
<div class="t" id="r31m" style="left:77.4px;top:779px;letter-spacing:0.199px">build.gradle</div>
<div class="t h" id="r31h" style="left:160.8px;top:779px;letter-spacing:-0.012px">(Module: PokedexApp.app)</div>
<svg class="ic" style="left:52.75px;top:802.5px" width="20" height="20" viewBox="0 0 16 16" ><path fill="#87929a" d="M7.100 1.400 3.200 5.300h3.900z"/><path fill="#87929a" d="M8.100 1.400v4.900H3.200v9.300h4.200V10.200h5.800V1.400z"/><path fill="#ee6a2a" d="M8.200 11.300h2.200v5H8.200z"/><path fill="#f4b73e" d="M11.200 9.300h2.100v7h-2.100z"/><path fill="#5fb83a" d="M14 7.600h2.300v8.700H14z"/></svg>
<div class="t" id="r32m" style="left:77.4px;top:804px;letter-spacing:0.152px">gradle-wrapper.properties</div>
<div class="t h" id="r32h" style="left:256.0px;top:804px;letter-spacing:-0.074px">(Gradle Version)</div>
<svg class="ic" style="left:52.75px;top:827.5px" width="20" height="20" viewBox="0 0 16 16" ><path fill="#87929a" d="M7.100 1.400 3.200 5.300h3.900z"/><path fill="#87929a" d="M8.100 1.400v4.900H3.200v9.300h10V1.400z"/><path stroke="#3c3f41" stroke-width="1" d="M5.100 7.900h6.100M5.100 9.900h6.100M5.100 12h3.700"/></svg>
<div class="t" id="r33m" style="left:77.4px;top:829px;letter-spacing:0.067px">proguard-rules.pro</div>
<div class="t h" id="r33h" style="left:205.2px;top:829px;letter-spacing:-0.161px">(ProGuard Rules for PokedexApp.app)</div>
<svg class="ic" style="left:52.75px;top:852.5px" width="20" height="20" viewBox="0 0 16 16" ><path fill="#87929a" d="M7.100 1.400 3.200 5.300h3.900z"/><path fill="#87929a" d="M8.100 1.400v4.900H3.200v9.300h4.200V10.200h5.800V1.400z"/><path fill="#ee6a2a" d="M8.200 11.300h2.200v5H8.200z"/><path fill="#f4b73e" d="M11.200 9.300h2.100v7h-2.100z"/><path fill="#5fb83a" d="M14 7.600h2.300v8.700H14z"/></svg>
<div class="t" id="r34m" style="left:77.4px;top:854px;letter-spacing:0.064px">gradle.properties</div>
<div class="t h" id="r34h" style="left:195.0px;top:854px;letter-spacing:-0.075px">(Project Properties)</div>
<div class="abs" style="left:467px;top:1px;width:10px;height:816px;background:#595b5d"></div>
</div>
<div class="abs" style="left:506px;top:72px;width:1px;height:904px;background:#323232;"></div>
<div class="abs" style="left:507px;top:105px;width:1387px;height:1px;background:#323232;"></div>
<svg class="ic" style="left:518px;top:79px" width="20" height="20" viewBox="0 0 16 16" ><circle cx="8" cy="8" r="7" fill="#40B6E0" fill-opacity="0.6"/><path fill="none" stroke="#2c2f33" stroke-opacity=".85" stroke-width="1.150" d="M10.200 6.500A2.700 2.700 0 1 0 10.200 9.500"/><path fill="#3c3f41" d="M8 8h8v8H8z"/><path fill="#b99bf8" d="M9 9h7l-3.500 3.500L16 16H9z"/></svg>
<div class="t " style="left:542.9px;top:79.6px;letter-spacing:-0.105px;">PokemonRepository.kt</div>
<svg class="ic" style="left:700px;top:84px" width="10" height="10" viewBox="0 0 10 10"><path stroke="#7d8184" stroke-width="1.200" d="M1 1l8 8M9 1 1 9"/></svg>
<div class="abs" style="left:718px;top:72px;width:202px;height:33px;background:#4e5254;"></div>
<div class="abs" style="left:718px;top:102px;width:202px;height:3px;background:#4a88c7;"></div>
<svg class="ic" style="left:729px;top:79px" width="20" height="20" viewBox="0 0 16 16" ><circle cx="8" cy="8" r="7" fill="#F4AF3D" fill-opacity="0.6"/><circle cx="8" cy="8" r="2.500" fill="none" stroke="#2c2f33" stroke-opacity=".85" stroke-width="1.150"/><path fill="#4e5254" d="M8 8h8v8H8z"/><path fill="#b99bf8" d="M9 9h7l-3.500 3.500L16 16H9z"/></svg>
<div class="t " style="left:753.5px;top:79.6px;letter-spacing:0.155px;">NetworkModuleDI.kt</div>
<svg class="ic" style="left:900px;top:84px" width="10" height="10" viewBox="0 0 10 10"><path stroke="#7d8184" stroke-width="1.200" d="M1 1l8 8M9 1 1 9"/></svg>
<div class="abs" style="left:1877px;top:81px;width:4px;height:4px;border-radius:2px;background:#afb1b3"></div>
<div class="abs" style="left:1877px;top:87px;width:4px;height:4px;border-radius:2px;background:#afb1b3"></div>
<div class="abs" style="left:1877px;top:93px;width:4px;height:4px;border-radius:2px;background:#afb1b3"></div>
<div class="abs" style="left:507px;top:106px;width:1387px;height:870px;background:#2b2b2b;"></div>
<div class="abs" style="left:507px;top:106px;width:84px;height:870px;background:#313335;"></div>
<div class="abs" style="left:591px;top:106px;width:1px;height:870px;background:#555555;"></div>
<div class="abs" style="left:592px;top:189px;width:1302px;height:41px;background:#323232;"></div>
<div class="abs" style="left:576px;top:189px;width:2px;height:82px;background:#47655f;"></div>
<div class="ln" style="top:107px;color:#606366">1</div>
<div class="ln" style="top:148px;color:#606366">2</div>
<div class="ln" style="top:189px;color:#a4a3a3">3</div>
<div class="ln" style="top:230px;color:#606366">4</div>
<div class="abs" style="left:707px;top:189px;width:225px;height:41px;background:#344134;"></div>
<div class="abs" style="left:946.5px;top:189px;width:15.5px;height:41px;background:#3b514d;"></div>
<div class="abs" style="left:602px;top:230px;width:15px;height:41px;background:#3b514d;"></div>
<div class="code" style="left:602.5px;top:107px"><span style="color:#cc7832">package</span> <span style="color:#a9b7c6">com.example.kotlin.mypokedexapp</span></div>
<div class="code" style="left:602.5px;top:189px"><span style="color:#cc7832">object</span> <span style="color:#72737a">NetworkModuleDI</span> <span style="color:#ffef28;font-weight:bold">{</span></div>
<div class="code" style="left:602.5px;top:230px"><span style="color:#ffef28;font-weight:bold">}</span></div>
<svg class="ic" style="left:582px;top:200px" width="20" height="62" viewBox="0 0 20 62"><path fill="#2b2b2b" stroke="#606366" stroke-width="1.200" d="M1.600 2.500h16v12l-8 8.500-8-8.500z"/><path stroke="#606366" stroke-width="1.200" d="M5 10.500h9"/><path fill="#2b2b2b" stroke="#606366" stroke-width="1.200" d="M1.600 59.500h16v-12l-8-8.500-8 8.500z"/><path stroke="#606366" stroke-width="1.200" d="M5 51.500h9"/></svg>
<svg class="ic" style="left:612px;top:169px" width="16" height="20" viewBox="0 0 16 20"><path fill="#f0a732" d="M8 1a6.300 6.300 0 0 1 6.300 6.300c0 2.400-1.600 3.800-2.300 5.900H4c-.7-2.100-2.300-3.500-2.300-5.900A6.300 6.300 0 0 1 8 1z"/><path stroke="#afb1b3" stroke-width="1.400" d="M4.300 14.800h7.400M4.800 17h6.400M6 19h4"/></svg>
<svg class="ic" style="left:1770px;top:114px" width="120" height="18" viewBox="0 0 120 18"><path fill="#d0a420" d="M9 1.500 16.500 15.500H1.500z"/><path stroke="#2b2b2b" stroke-width="1.800" d="M9 6v5M9 12.200v1.800"/><path fill="#2a6e0c" d="M45 1.500 52.500 15.500H37.500z"/><path stroke="#2b2b2b" stroke-width="1.800" d="M45 6v5M45 12.200v1.800"/><path fill="none" stroke="#b4b4b4" stroke-width="1.500" d="M78 11.500l5-5 5 5M104 7l5 5 5-5"/></svg>
<div class="t " style="left:1791px;top:113px;font-size:14px">1</div>
<div class="t " style="left:1827px;top:113px;font-size:14px">1</div>
<div class="abs" style="left:1876px;top:221px;width:17px;height:42px;background:#79715c;"></div>
<div class="abs" style="left:1876px;top:221px;width:17px;height:3px;background:#1f7a1f;"></div>
<div class="abs" style="left:1894px;top:72px;width:1px;height:904px;background:#323232;"></div>
<svg class="ic" style="left:1900.1px;top:83.2px" width="16.3" height="16.3" viewBox="0 0 16 16" ><path fill="#afb1b3" d="M15.5,3.220a2.700,2.700,0,0,0-3.740-.070.260.260,0,0,0,0,.370l.320.330a.250.250,0,0,0,.330,0,1.540,1.540,0,0,1,2,2.310C12.320,8.300,9.560,2.470,3.300,5.450a.860.860,0,0,0-.370,1.200L4,8.510a.850.850,0,0,0,1.150.310l.470-.260a11,11,0,0,0,1.500-1.110.260.260,0,0,1,.340,0h0a.260.260,0,0,1,0,.390,11.180,11.180,0,0,1-1.570,1.180h0l-.470.260a1.360,1.360,0,0,1-.670.180,1.390,1.390,0,0,1-1.210-.7L2.500,7A8.810,8.810,0,0,0,.060,13.520a.260.260,0,0,0,.260.250H2a.250.250,0,0,0,.250-.220,1.220,1.220,0,0,1,2.420,0,.250.250,0,0,0,.250.220H6.560a.250.250,0,0,0,.250-.220,1.220,1.220,0,0,1,2.420,0,.250.250,0,0,0,.250.220h1.620a.260.260,0,0,0,.260-.250c0-2.290.650-4.920,2.410-6.230C16.740,4.890,16.190,3.910,15.500,3.220Zm-3.340,4L11,6.640H11a.730.730,0,1,1,1.160.590Z"/></svg>
<div class="vt" style="left:1913px;top:105px;transform:rotate(90deg);font-size:12.85px">Gradle</div>
<svg class="ic" style="left:1895px;top:168px" width="22" height="22" viewBox="1895 168 22 22"><path fill="none" stroke="#afb1b3" stroke-width="1.600" d="M1911.800 175V172.500a.8.800 0 0 0-.8-.8H1902.900a.8.800 0 0 0-.8.800v12.300a.8.800 0 0 0 .8.800H1905"/><rect x="1906.100" y="177" width="9.600" height="9.400" rx="1" fill="#afb1b3"/><rect x="1907.600" y="178.800" width="6.600" height="4.600" fill="#3c3f41"/></svg>
<div class="vt" style="left:1913px;top:193px;transform:rotate(90deg);font-size:13.15px">Device Manager</div>
<svg class="ic" style="left:1895px;top:724px" width="22" height="22" viewBox="1895 724 22 22"><rect x="1902.100" y="727" width="12" height="16.100" rx="1.200" fill="#afb1b3"/><rect x="1904.100" y="730.400" width="7.800" height="9.100" fill="#3c3f41"/><rect x="1906.600" y="741" width="3" height="1" fill="#3c3f41"/></svg>
<div class="vt" style="left:1913px;top:749.8px;transform:rotate(90deg);font-size:12.65px">Device File Explorer</div>
<svg class="ic" style="left:1895px;top:888px" width="22" height="22" viewBox="1895 888 22 22"><path fill="#afb1b3" d="M1903.300 891h6.800a1.200 1.200 0 0 1 1.200 1.200V898.500h-2V894h-5.200v8.500h2.500v2.600h-3.300a1.200 1.200 0 0 1-1.200-1.200V892.200a1.200 1.200 0 0 1 1.200-1.200z"/><path fill="#afb1b3" d="M1907.100 899.500h8v5.400h-8zM1907.100 905.900h8v1.200h-8z"/><rect x="1909" y="901.300" width="4.700" height="2" fill="#3c3f41"/></svg>
<div class="vt" style="left:1913px;top:913.8px;transform:rotate(90deg);font-size:13.0px">Emulator</div>
<div class="abs" style="left:0px;top:977px;width:1917px;height:28px;background:#3c3f41;"></div>
<div class="abs" style="left:0px;top:976px;width:1917px;height:1px;background:#323232;"></div>
<div class="abs" style="left:0px;top:1004px;width:1917px;height:1px;background:#555555;"></div>
<svg class="ic" style="left:40.3px;top:983.5px" width="16" height="16" viewBox="0 0 16 16" ><circle cx="8" cy="7.500" r="6.700" fill="#afb1b3"/><path stroke="#3c3f41" stroke-width="2" d="M8 3.300v5M8 9.800v2"/></svg>
<div class="bt" style="left:61.2px;letter-spacing:-0.15px">Problems</div>
<svg class="ic" style="left:143px;top:983.5px" width="16" height="16" viewBox="0 0 16 16" ><path fill="none" stroke="#afb1b3" stroke-width="2" d="M5 3v11M5 10.500c5 0 6.500-1.500 6.500-5"/><circle cx="5" cy="3.200" r="2.200" fill="#afb1b3"/><circle cx="11.500" cy="4.800" r="2.200" fill="#afb1b3"/><circle cx="5" cy="13.800" r="2.200" fill="#afb1b3"/></svg>
<div class="bt" style="left:165px;letter-spacing:0.18px">Version Control</div>
<svg class="ic" style="left:285px;top:983.5px" width="16" height="16" viewBox="0 0 16 16" ><path fill="#afb1b3" d="M.500 1.500h14v12.500H.500z"/><path fill="none" stroke="#3c3f41" stroke-width="1.400" d="M3 5 6.500 7.800 3 10.600M7.500 11h5"/></svg>
<div class="bt" style="left:306px;letter-spacing:0.1px">Terminal</div>
<svg class="ic" style="left:380.5px;top:983.5px" width="16" height="16" viewBox="0 0 16 16" ><path stroke="#afb1b3" stroke-width="2.600" d="M1 4.300h13.500M1 8.300h8.500M1 12.300h12"/></svg>
<div class="bt" style="left:401.3px;letter-spacing:0px">Logcat</div>
<svg class="ic" style="left:466.5px;top:983.5px" width="16" height="16" viewBox="0 0 16 16" ><path fill="#afb1b3" d="M4.500 1.500h7l.8 3.500H15v2h-2.300c0 1.500-.5 2.600-1.300 3.400l3.100 2.100v3H1.500v-3l3.100-2.100C3.800 9.600 3.300 8.500 3.300 7H1V5h2.700z"/></svg>
<div class="bt" style="left:488px;letter-spacing:0.1px">App Inspection</div>
<svg class="ic" style="left:602.5px;top:983.5px" width="16" height="16" viewBox="0 0 16 16" ><path stroke="#afb1b3" stroke-width="2.500" d="M.500 3.800h2.700M4.800 3.800h9.200M.500 8h2.700M4.800 8h9.200M.500 12.200h2.700M4.800 12.200h9.200"/></svg>
<div class="bt" style="left:623px;letter-spacing:-0.3px">TODO</div>
<svg class="ic" style="left:683px;top:983.5px" width="16" height="16" viewBox="0 0 16 16" ><path fill="none" stroke="#afb1b3" stroke-width="3" d="M2 14A6.500 6.500 0 0 1 9.500 5.800M12 6.800A6.500 6.500 0 0 1 14.500 14"/><path stroke="#afb1b3" stroke-width="2" d="M8 13.500 11 6.500"/></svg>
<div class="bt" style="left:705px;letter-spacing:0.1px">Profiler</div>
<svg class="ic" style="left:1654.5px;top:983.5px" width="16" height="16" viewBox="0 0 16 16" ><path fill="none" stroke="#afb1b3" stroke-width="1.700" d="M14.300 14.300V7.800A6.500 6.500 0 1 0 7.800 14.300z"/></svg>
<div class="bt" style="left:1676px;letter-spacing:0px">Event Log</div>
<svg class="ic" style="left:1760px;top:983.5px" width="16" height="16" viewBox="0 0 16 16" ><path fill="none" stroke="#afb1b3" stroke-width="1.500" d="M3.500 9.500H1.200V1.200h10.300v2M4.200 12V4.200h10.300v3"/><circle cx="10" cy="10" r="2.800" fill="none" stroke="#afb1b3" stroke-width="1.600"/><path stroke="#afb1b3" stroke-width="1.900" d="M12 12l3.200 3.200"/></svg>
<div class="bt" style="left:1783px;letter-spacing:0px">Layout Inspector</div>
</body></html>
